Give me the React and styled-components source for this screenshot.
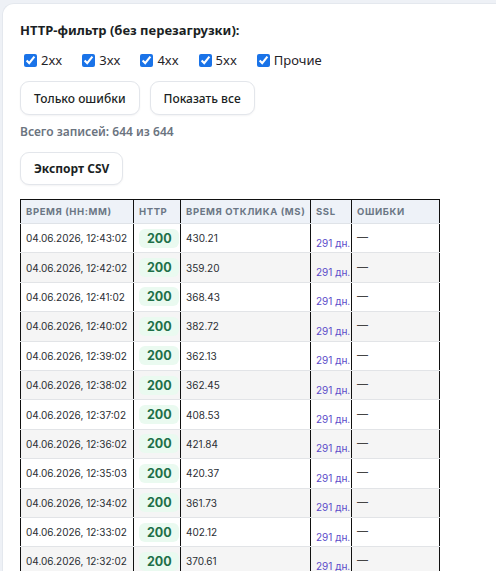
import React from "react";
import styled, { createGlobalStyle } from "styled-components";

const Global = createGlobalStyle`
  html, body { margin: 0; padding: 0; background: #eef1f6; }
  body { font-family: "Noto Sans", "Open Sans", sans-serif; color: #1f2328; overflow: hidden; }
`;

const Page = styled.div`
  padding: 3px 0 0 2px;
`;

const Card = styled.div`
  background: #fff;
  border: 1px solid #e4e8ee;
  border-right: none;
  border-bottom: none;
  border-radius: 12px 0 0 0;
  padding: 15px 18px 0 17px;
  min-height: 600px;
`;

const Title = styled.div`
  font-size: 13px;
  font-weight: 700;
  line-height: 22px;
  color: #1b1f24;
`;

const Filters = styled.div`
  display: flex;
  gap: 16px;
  margin-top: 10px;
  height: 18px;
  align-items: center;
`;

const Check = styled.label`
  display: flex;
  align-items: center;
  gap: 4px;
  font-size: 13px;
  color: #1f2328;
  input {
    margin: 0 0 0 4px;
    width: 13px;
    height: 13px;
    accent-color: #1a73e8;
  }
`;

const ButtonRow = styled.div`
  display: flex;
  gap: 10px;
  margin-top: 12px;
`;

const Button = styled.button`
  height: ${(p) => (p.$bold ? "33px" : "34px")};
  padding: 0 13px;
  background: #fff;
  border: 1px solid #e3e6eb;
  border-radius: 9px;
  box-shadow: 0 1px 2px rgba(16, 24, 40, 0.05);
  font-family: "Noto Sans", "Open Sans", sans-serif;
  font-size: 12px;
  font-weight: ${(p) => (p.$bold ? 700 : 500)};
  color: #1b1f24;
`;

const Count = styled.div`
  margin-top: 9px;
  font-size: 12px;
  font-weight: 600;
  color: #6b7480;
  line-height: 16px;
`;

const ExportWrap = styled.div`
  margin-top: 12px;
  display: flex;
`;

const Table = styled.table`
  margin-top: 14px;
  border-collapse: collapse;
  table-layout: fixed;
  width: 419px;
  border-top: 1px solid #111;
  font-family: "Inter", sans-serif;
`;

const Th = styled.th`
  background: #eef2f8;
  height: 23px;
  padding: 0 5px;
  text-align: left;
  font-size: 9.5px;
  font-weight: 700;
  letter-spacing: 0.6px;
  text-transform: uppercase;
  color: #6b7785;
  border-left: 1px solid #111;
  border-right: 1px solid #111;
  border-bottom: 1px solid #dfe3e8;
  white-space: nowrap;
  overflow: hidden;
`;

const Tr = styled.tr`
  background: ${(p) => (p.$alt ? "#f5f5f5" : "#fff")};
`;

const Td = styled.td`
  height: 28.4px;
  padding: 0 5px;
  font-size: 10px;
  color: #2a2e33;
  border-left: 1px solid #111;
  border-right: 1px solid #111;
  border-bottom: 1px solid #e2e4e7;
  vertical-align: middle;
  white-space: nowrap;
`;

const Badge = styled.span`
  display: inline-block;
  padding: 2px 7px 2px 8px;
  border-radius: 6px;
  background: #eafaf0;
  color: #1e6f48;
  font-weight: 700;
  font-size: 12.5px;
  line-height: 15px;
`;

const Ssl = styled.span`
  display: inline-block;
  margin-top: 9px;
  font-size: 10px;
  color: #5b4cc9;
`;

const Dash = styled.span`
  display: inline-block;
  margin-bottom: 2px;
  font-size: 11px;
  color: #444;
`;

const rows = [
  ["04.06.2026, 12:43:02", "430.21"],
  ["04.06.2026, 12:42:02", "359.20"],
  ["04.06.2026, 12:41:02", "368.43"],
  ["04.06.2026, 12:40:02", "382.72"],
  ["04.06.2026, 12:39:02", "362.13"],
  ["04.06.2026, 12:38:02", "362.45"],
  ["04.06.2026, 12:37:02", "408.53"],
  ["04.06.2026, 12:36:02", "421.84"],
  ["04.06.2026, 12:35:03", "420.37"],
  ["04.06.2026, 12:34:02", "361.73"],
  ["04.06.2026, 12:33:02", "402.12"],
  ["04.06.2026, 12:32:02", "370.61"],
  ["04.06.2026, 12:31:02", "389.04"],
];

export default function App() {
  return (
    <>
      <Global />
      <Page>
        <Card>
          <Title>HTTP‑фильтр (без перезагрузки):</Title>
          <Filters>
            {["2xx", "3xx", "4xx", "5xx", "Прочие"].map((l) => (
              <Check key={l}>
                <input type="checkbox" defaultChecked />
                {l}
              </Check>
            ))}
          </Filters>
          <ButtonRow>
            <Button>Только ошибки</Button>
            <Button>Показать все</Button>
          </ButtonRow>
          <Count>Всего записей: 644 из 644</Count>
          <ExportWrap>
            <Button $bold>Экспорт CSV</Button>
          </ExportWrap>
          <Table>
            <colgroup>
              <col style={{ width: 113 }} />
              <col style={{ width: 47 }} />
              <col style={{ width: 130 }} />
              <col style={{ width: 41 }} />
              <col style={{ width: 88 }} />
            </colgroup>
            <thead>
              <tr>
                <Th>Время (HH:MM)</Th>
                <Th>HTTP</Th>
                <Th>Время отклика (ms)</Th>
                <Th>SSL</Th>
                <Th>Ошибки</Th>
              </tr>
            </thead>
            <tbody>
              {rows.map(([t, v], i) => (
                <Tr key={t} $alt={i % 2 === 1}>
                  <Td>{t}</Td>
                  <Td>
                    <Badge>200</Badge>
                  </Td>
                  <Td>{v}</Td>
                  <Td>
                    <Ssl>291 дн.</Ssl>
                  </Td>
                  <Td>
                    <Dash>—</Dash>
                  </Td>
                </Tr>
              ))}
            </tbody>
          </Table>
        </Card>
      </Page>
    </>
  );
}
